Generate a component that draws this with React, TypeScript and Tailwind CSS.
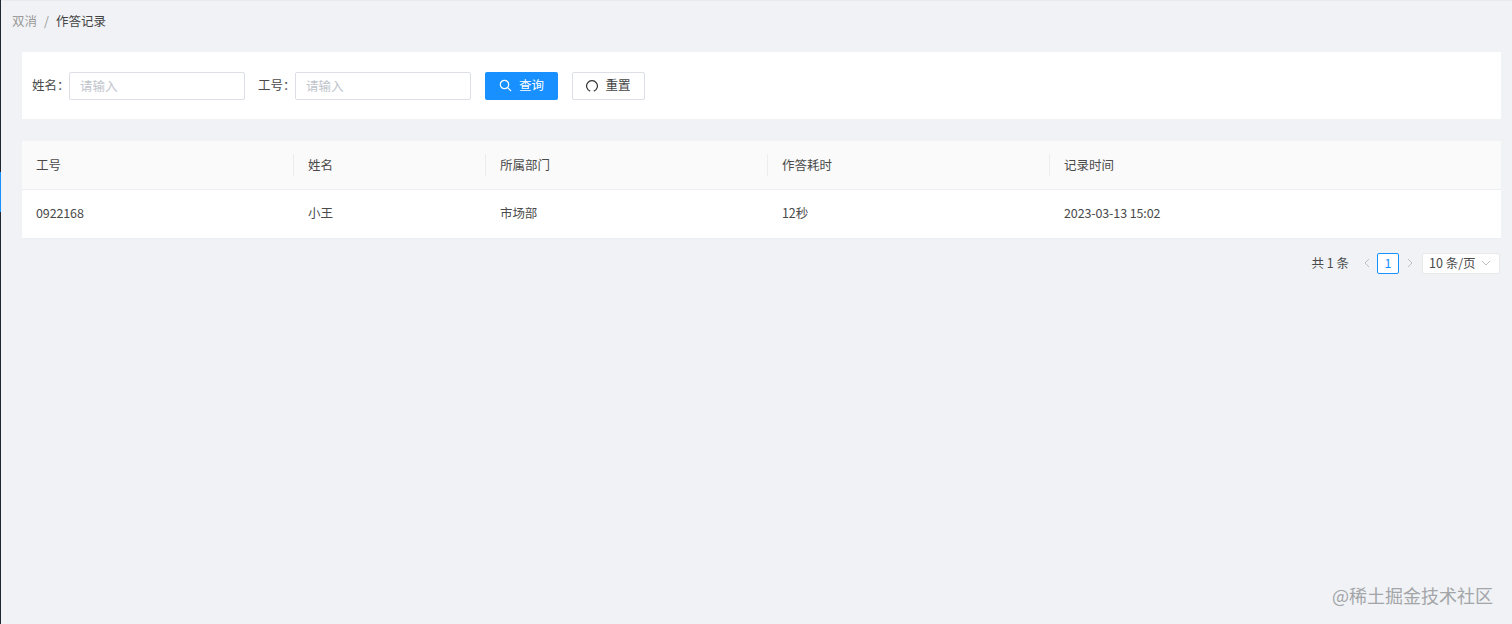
const font = '[font-family:"Noto_Sans_CJK_SC","Liberation_Sans",sans-serif]';

const columns = [
  { title: '工号', value: '0922168', width: 'w-[271px]' },
  { title: '姓名', value: '小王', width: 'w-[192px]' },
  { title: '所属部门', value: '市场部', width: 'w-[282px]' },
  { title: '作答耗时', value: '12秒', width: 'w-[282px]' },
  { title: '记录时间', value: '2023-03-13 15:02', width: 'flex-1' },
];

function Field({ label }: { label: string }) {
  return (
    <div className="flex items-center">
      <span className="text-[12.5px] text-[#4a4a4a] w-[37px] whitespace-nowrap">{label}：</span>
      <input
        placeholder="请输入"
        className="w-[176px] h-[28px] border border-[#dcdfe6] rounded-[2px] bg-white px-[10px] text-[12.5px] placeholder:text-[#c0c4cc] outline-none"
      />
    </div>
  );
}

export default function App() {
  return (
    <div className={`relative flex h-[624px] w-[1512px] overflow-hidden bg-[#f0f2f5] ${font}`}>
      {/* collapsed sidebar edge */}
      <div className="w-px shrink-0 bg-[#1f2733] pt-[172px]">
        <div className="h-[40px] bg-[#1890ff]" />
      </div>

      <div className="flex-1 flex flex-col">
        <div className="h-[42px] flex items-center pl-[11px] text-[12.5px] border-t border-[#e8eaed]">
          <span className="text-[#9a9a9a]">双消</span>
          <span className="mx-[7px] text-[#9a9a9a]">/</span>
          <span className="text-[#444]">作答记录</span>
        </div>

        <div className="ml-[21px] mr-[11px] mt-[10px]">
          {/* Search */}
          <div className="h-[67px] bg-white flex items-center pl-[10px]">
            <Field label="姓名" />
            <div className="w-[13px]" />
            <Field label="工号" />
            <button className="ml-[14px] w-[73px] h-[28px] rounded-[2px] bg-[#1890ff] text-white text-[12.5px] flex items-center justify-center gap-[7px]">
              <svg width="13" height="13" viewBox="0 0 13 13" fill="none" stroke="currentColor" strokeWidth="1.2">
                <circle cx="5.5" cy="5.5" r="4.2" />
                <path d="M8.6 8.6L12 12" />
              </svg>
              查询
            </button>
            <button className="ml-[14px] w-[73px] h-[28px] rounded-[2px] border border-[#dcdfe6] bg-white text-[#444] text-[12.5px] flex items-center justify-center gap-[7px]">
              <svg width="12" height="12" viewBox="0 0 12 12" fill="none" stroke="#333" strokeWidth="1.2">
                <path d="M4.2 11.1A5.4 5.4 0 1 1 7.8 11.1" />
              </svg>
              重置
            </button>
          </div>

          {/* Table */}
          <div className="mt-[22px] bg-white text-[12.5px] text-[#4a4a4a]">
            <div className="h-[49px] flex items-center bg-[#fafafa] border-b border-[#ebeef5]">
              {columns.map((col, i) => (
                <div
                  key={col.title}
                  className={`${col.width} h-[22px] flex items-center pl-[14px] border-[#ededed] ${i > 0 ? 'border-l' : ''}`}
                >
                  {col.title}
                </div>
              ))}
            </div>
            <div className="h-[49px] flex items-center pb-px border-b border-[#ebeef5] tracking-[-0.12px]">
              {columns.map((col, i) => (
                <div key={col.title} className={`${col.width} ${i > 0 ? 'pl-[15px]' : 'pl-[14px]'}`}>
                  {col.value}
                </div>
              ))}
            </div>
          </div>

          {/* Pagination */}
          <div className="mt-[13px] h-[22px] flex items-center justify-end pr-px text-[12.5px] text-[#4a4a4a]">
            <span className="whitespace-pre">共 1 条</span>
            <svg className="ml-[14px]" width="8" height="10" viewBox="0 0 8 10" fill="none" stroke="#bfbfbf">
              <path d="M6 1L2 5l4 4" />
            </svg>
            <span className="ml-[6px] w-[22px] h-[21px] flex items-center justify-center rounded-[2px] border border-[#1890ff] text-[#1890ff] bg-white">
              1
            </span>
            <svg className="ml-[7px]" width="8" height="10" viewBox="0 0 8 10" fill="none" stroke="#bfbfbf">
              <path d="M2 1l4 4-4 4" />
            </svg>
            <div className="ml-[8px] w-[78px] h-[21px] flex items-center justify-between bg-white border border-[#e8e8e8] rounded-[2px] pl-[6px] pr-[8px] whitespace-nowrap">
              <span>10 条/页</span>
              <svg width="10" height="6" viewBox="0 0 10 6" fill="none" stroke="#bfbfbf">
                <path d="M1 1l4 4 4-4" />
              </svg>
            </div>
          </div>
        </div>
      </div>

      {/* site watermark over the page */}
      <span className="absolute right-[19px] top-[583px] text-[18px] leading-[24px] text-[#a3a5a8]">
        @稀土掘金技术社区
      </span>
    </div>
  );
}
